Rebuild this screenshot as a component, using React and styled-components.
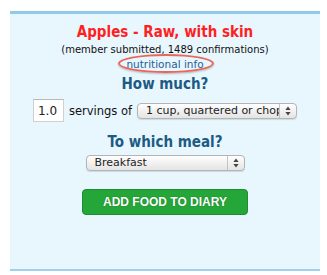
import React from 'react'
import styled, { createGlobalStyle } from 'styled-components'

const GlobalStyle = createGlobalStyle`
  body {
    margin: 0;
    background: #ffffff;
    font-family: "DejaVu Sans", Verdana, sans-serif;
  }
`

function SelectBox({ width, value }) {
    return (
        <SelectFrame width={width}>
            <SelectText>{value}</SelectText>
            <SelectArrows>
                <svg width="6" height="10" viewBox="0 0 6 10">
                    <path d="M3 0.5 L5.6 4 L0.4 4 Z" fill="#444" />
                    <path d="M3 9.5 L5.6 6 L0.4 6 Z" fill="#444" />
                </svg>
            </SelectArrows>
        </SelectFrame>
    )
}

export default function App() {
    return (
        <>
            <GlobalStyle />
            <Panel>
                <Title>Apples - Raw, with skin</Title>
                <Submitted>(member submitted, 1489 confirmations)</Submitted>
                <LinkLine>
                    <InfoLink href="#">nutritional info</InfoLink>
                </LinkLine>

                <Heading>How much?</Heading>
                <AmountRow>
                    <AmountInput defaultValue="1.0" />
                    <RowLabel>servings of</RowLabel>
                    <SelectBox width={160} value="1 cup, quartered or chopped" />
                </AmountRow>

                <Heading top={12}>To which meal?</Heading>
                <MealRow>
                    <SelectBox width={159} value="Breakfast" />
                </MealRow>

                <AddButton>ADD FOOD TO DIARY</AddButton>
            </Panel>
        </>
    )
}

const Panel = styled.div`
  width: 310px;
  margin: 11px 0 0 10px;
  background: #e8f6fd;
  border-top: 3px solid #8dcbe7;
  border-bottom: 2px solid #9dd2ea;
  padding: 10px 0 54px;
  display: flex;
  flex-direction: column;
  align-items: center;
`

const Title = styled.div`
  font-family: "DejaVu Sans Condensed", "DejaVu Sans", sans-serif;
  font-stretch: condensed;
  font-weight: bold;
  font-size: 15px;
  line-height: 17px;
  color: #ff1f1f;
`

const Submitted = styled.div`
  margin-top: 2px;
  font-size: 10px;
  line-height: 13px;
  color: #111;
`

const LinkLine = styled.div`
  line-height: 13px;
`

// the red ring is a hand-drawn highlight laid over the link
const InfoLink = styled.a`
  position: relative;
  display: inline-block;
  font-size: 10.5px;
  color: #1f5f96;
  text-decoration: none;

  &::after {
    content: '';
    position: absolute;
    top: -4px;
    bottom: -2px;
    left: -8px;
    right: -10px;
    border: 2px solid #e8665a;
    border-radius: 50%;
    box-shadow: 0 1px 2px rgba(0, 0, 0, 0.25);
  }
`

const Heading = styled.div`
  margin-top: ${p => p.top || 5}px;
  font-family: "DejaVu Sans Condensed", "DejaVu Sans", sans-serif;
  font-stretch: condensed;
  font-weight: bold;
  font-size: 15px;
  line-height: 17px;
  color: #1c5b84;
`

const AmountRow = styled.div`
  margin-top: 6px;
  display: flex;
  align-items: center;
  gap: 5px;
`

const AmountInput = styled.input`
  box-sizing: border-box;
  width: 31px;
  height: 23px;
  padding: 0 0 0 4px;
  border: 1px solid #d0d0d0;
  border-top-color: #b8b8b8;
  background: #fff;
  font-family: "DejaVu Sans", sans-serif;
  font-size: 12px;
  color: #222;
  outline: none;
`

const RowLabel = styled.span`
  font-size: 11.5px;
  color: #111;
`

const MealRow = styled.div`
  margin-top: 4px;
  display: flex;
`

const SelectFrame = styled.div`
  box-sizing: border-box;
  width: ${p => p.width}px;
  height: 16px;
  display: flex;
  align-items: stretch;
  border: 1px solid #b4b4b4;
  border-radius: 4px;
  background: linear-gradient(#ffffff, #f1f1f1 50%, #e4e4e4);
  box-shadow: 0 1px 1px rgba(0, 0, 0, 0.12);
  overflow: hidden;
`

const SelectText = styled.div`
  flex: 1;
  min-width: 0;
  padding-left: 8px;
  white-space: nowrap;
  overflow: hidden;
  font-family: "DejaVu Sans", sans-serif;
  font-size: 11px;
  line-height: 14px;
  color: #222;
`

const SelectArrows = styled.div`
  width: 16px;
  border-left: 1px solid #c4c4c4;
  display: flex;
  align-items: center;
  justify-content: center;
`

const AddButton = styled.button`
  margin-top: 18px;
  width: 166px;
  height: 26px;
  border: 1px solid #1c8d30;
  border-radius: 4px;
  background: #24a638;
  color: #fff;
  font-family: "Liberation Sans", Arial, sans-serif;
  font-weight: bold;
  font-size: 12px;
  text-shadow: 0 0 1px rgba(0, 60, 0, 0.6);
  cursor: pointer;
`
